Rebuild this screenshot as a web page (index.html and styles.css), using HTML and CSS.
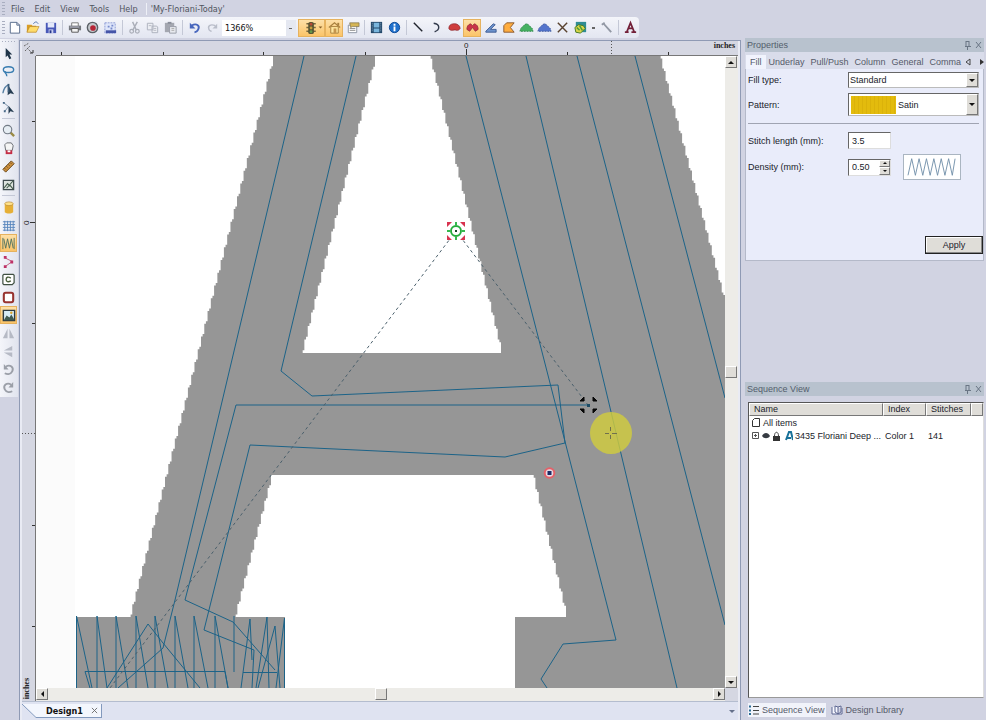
FILE: index.html
```html
<!DOCTYPE html>
<html lang="en">
<head>
<meta charset="utf-8">
<title>My-Floriani-Today</title>
<link rel="stylesheet" href="styles.css">
</head>
<body>
<nav class="menubar" aria-label="Menu">
  <span class="grip"></span>
  <button>File</button><button>Edit</button><button>View</button><button>Tools</button><button>Help</button>
  <span class="menu-sep"></span>
  <button>'My-Floriani-Today'</button>
</nav>

<div class="toolbar" role="toolbar" aria-label="Main">
  <span class="grip"></span>
  <button class="tool" aria-label="New"><svg viewBox="0 0 16 16"><path d="M3.500 2.500h7l3 3v8.500h-10z" fill="#fff" stroke="#536789"/><path d="M10.500 2.500v3h3" fill="none" stroke="#536789"/></svg></button>
  <button class="tool" aria-label="Open"><svg viewBox="0 0 16 16"><path d="M2 13V5h5l1 1h4v7z" fill="#d99d26"/><path d="M2 13l3-6h10l-3 6z" fill="#ffdc6b" stroke="#ad7b1e" stroke-width=".6"/><path d="M9 4c2-3 4-2 5 0" fill="none" stroke="#4b6fa8"/></svg></button>
  <button class="tool" aria-label="Save"><svg viewBox="0 0 16 16"><path d="M3 3h11v11H3z" fill="#4858b8"/><path d="M5 3h7v5H5z" fill="#e4e9fa"/><path d="M6 10h5v4H6z" fill="#c8cdf0"/><path d="M7 11h2v3H7z" fill="#26378b"/></svg></button>
  <span class="sep"></span>
  <button class="tool" aria-label="Print"><svg viewBox="0 0 16 16"><path d="M5 3h7v4H5z" fill="#fff" stroke="#777"/><path d="M2 6h13v5H2z" fill="#73777d"/><path d="M5 9h7v4H5z" fill="#f4f4f4" stroke="#555"/><path d="M3 7h10v1H3z" fill="#bbc"/></svg></button>
  <button class="tool" aria-label="Record"><svg viewBox="0 0 16 16"><circle cx="8" cy="8" r="5.500" fill="#c5c9cd" stroke="#5a6066" stroke-width="1.500"/><circle cx="8.500" cy="8.500" r="3" fill="#b52536"/></svg></button>
  <button class="tool" aria-label="Design grid"><svg viewBox="0 0 16 16"><path d="M2 3h11v11H2z" fill="#dfe6fa" stroke="#8c9ad4" stroke-dasharray="2 1"/><path d="M3 11h11v3H3z" fill="#4555a8"/><path d="M5 6h2v2H5zM9 5h2v2H9zM8 8h2v2H8z" fill="#7689cb"/></svg></button>
  <span class="sep"></span>
  <button class="tool" aria-label="Cut"><svg viewBox="0 0 16 16"><path d="M6 2l4 9M11 2L6 11" stroke="#aaaeb8" stroke-width="1.500"/><circle cx="5" cy="12" r="2" fill="none" stroke="#aaaeb8" stroke-width="1.300"/><circle cx="11" cy="12" r="2" fill="none" stroke="#aaaeb8" stroke-width="1.300"/></svg></button>
  <button class="tool" aria-label="Copy"><svg viewBox="0 0 16 16"><path d="M2.500 3.500h6v7h-6zM7.500 6.500h5l1 1v6h-6z" fill="#eceef3" stroke="#adb1bd"/><path d="M9 9h3M9 11h3M4 6h3" stroke="#b7bac4"/></svg></button>
  <button class="tool" aria-label="Paste"><svg viewBox="0 0 16 16"><path d="M2 3h10v10H2z" fill="#a4a7b0"/><path d="M5 2h4v2H5z" fill="#888d98"/><path d="M7 7h7v7H7z" fill="#e7e9ee" stroke="#999da8"/><path d="M9 9h3M9 11h3" stroke="#aaa"/></svg></button>
  <span class="sep"></span>
  <button class="tool" aria-label="Undo"><svg viewBox="0 0 16 16"><path d="M5 6c5-3 9 0 7 4-1 2-2 3-4 3" fill="none" stroke="#4766bd" stroke-width="2"/><path d="M3 3v6h6z" fill="#4766bd"/></svg></button>
  <button class="tool" aria-label="Redo"><svg viewBox="0 0 16 16"><path d="M11 6C6 4 3 6 4 9c0 2 2 3 3 3" fill="none" stroke="#b9bdc9" stroke-width="1.500"/><path d="M13 4v5H8z" fill="#b9bdc9"/></svg></button>
  <select class="zoom" aria-label="Zoom"><option>1366%</option></select>
  <button class="tool wide on" aria-label="Stitch simulator"><svg viewBox="0 0 24 16"><path d="M6 4h10M6 8h10M6 12h10" stroke="#7a6940" stroke-width="1.500"/><rect x="8" y="2" width="6" height="13" rx="2" fill="#555534"/><circle cx="11" cy="4.500" r="1.500" fill="#b64a37"/><circle cx="11" cy="8.500" r="1.500" fill="#c69b3c"/><circle cx="11" cy="12.500" r="1.500" fill="#649a4b"/><path d="M19 7h4l-2 2z" fill="#876027"/></svg></button>
  <button class="tool on" aria-label="Home"><svg viewBox="0 0 16 16"><path d="M2 8l6-5 6 5" fill="none" stroke="#a8813f" stroke-width="1.300"/><path d="M4 7h8v7H4z" fill="#ffe7a0" stroke="#a8813f"/><path d="M7 9h3v5H7z" fill="#c4954d"/><path d="M11 3h2v3h-2z" fill="#a8813f"/></svg></button>
  <button class="tool" aria-label="Properties"><svg viewBox="0 0 16 16"><path d="M3.500 5.500h9v8h-9z" fill="#fff" stroke="#8b93a2"/><path d="M5 9h6M5 11h6" stroke="#888"/><path d="M5 3h10v4H8L6 8z" fill="#d5b556" stroke="#776b48" stroke-width=".7"/></svg></button>
  <span class="sep"></span>
  <button class="tool" aria-label="Film"><svg viewBox="0 0 16 16"><path d="M2 2h12v12H2z" fill="#23486a"/><path d="M5 3h6v5H5zM5 9h6v4H5z" fill="#79b5dc"/><path d="M3.500 3v10M12.500 3v10" stroke="#7fa1bd" stroke-dasharray="1 1"/></svg></button>
  <button class="tool" aria-label="Information"><svg viewBox="0 0 16 16"><circle cx="8" cy="8" r="5.500" fill="#1f70cc" stroke="#0d4a95"/><path d="M7 7h2v5H7zM7 4h2v2H7z" fill="#fff"/></svg></button>
  <span class="sep"></span>
  <button class="tool" aria-label="Line"><svg viewBox="0 0 16 16"><path d="M3 3l9 9" stroke="#20242d" stroke-width="1.500"/></svg></button>
  <button class="tool" aria-label="Arc"><svg viewBox="0 0 16 16"><path d="M5 3.500c7 1 7 7 1 9" fill="none" stroke="#333b4c" stroke-width="1.500"/></svg></button>
  <button class="tool" aria-label="Closed shape"><svg viewBox="0 0 16 16"><path d="M2 9c0-4 3-5 6-5s6 2 6 5c-1 2-3 2-4 2-2-1-3 0-5 0-1 0-3-1-3-2z" fill="#cf3d3d" stroke="#8d2b30" stroke-width=".8"/></svg></button>
  <button class="tool on" aria-label="Satin column"><svg viewBox="0 0 16 16"><path d="M2 10c0-3 1-5 4-6l2 2 2-2c3 1 4 3 4 6l-3 2-3-4-3 4z" fill="#c93447" stroke="#8d2b38" stroke-width=".8"/></svg></button>
  <button class="tool" aria-label="Angle fill"><svg viewBox="0 0 16 16"><path d="M3 12l8-8 2 1-5 5h6v3H3z" fill="#6d93cd" stroke="#34528c" stroke-width=".9"/></svg></button>
  <button class="tool" aria-label="Shape fill"><svg viewBox="0 0 16 16"><path d="M3 13V6l3-3h8l-4 5 4 5z" fill="#ffad3e" stroke="#8a5930"/></svg></button>
  <button class="tool" aria-label="Green fan"><svg viewBox="0 0 16 16"><path d="M1 12l1-3 2-2 2-2 2-1 2 1 2 2 2 2 1 3z" fill="#46b162" stroke="#2c8546" stroke-width="1" stroke-dasharray="2 1"/></svg></button>
  <button class="tool" aria-label="Blue fan"><svg viewBox="0 0 16 16"><path d="M1 12l1-3 2-2 2-2 2-1 2 1 2 2 2 2 1 3z" fill="#5474cc" stroke="#3a559d" stroke-width="1" stroke-dasharray="2 1"/></svg></button>
  <button class="tool" aria-label="Cross"><svg viewBox="0 0 16 16"><path d="M3 3l10 10M13 3L3 13" stroke="#59422f" stroke-width="1.500"/></svg></button>
  <button class="tool" aria-label="Appliqué"><svg viewBox="0 0 16 16"><path d="M3 2h11v11H3z" fill="#2f8c93"/><path d="M2 8l4-3 5 1 2 3-5 5-5-1z" fill="#d9d449" stroke="#447b27"/><path d="M4 8l3 3M7 6l3 5" stroke="#4b9a35" stroke-width="1.500"/></svg></button>
  <span class="drop-arrow"></span>
  <button class="tool" aria-label="Needle"><svg viewBox="0 0 16 16"><path d="M5 4l8 9M3 5l3-2" stroke="#9298a4" stroke-width="2"/></svg></button>
  <span class="sep"></span>
  <button class="tool" aria-label="Text"><svg viewBox="0 0 16 16"><path d="M2 13h4M9 13h5M4 13L8 3l4 10M6 9h5" fill="none" stroke="#722038" stroke-width="1.800"/></svg></button>
</div>

<main class="workspace">
  <div class="toolbox" role="toolbar" aria-label="Drawing tools">
    <span class="grip-h"></span>
    <button class="tool" aria-label="Select"><svg viewBox="0 0 16 16"><path d="M5 2v10l2-2 2 4 2-1-2-4h3z" fill="#1f3449"/></svg></button>
    <button class="tool" aria-label="Lasso"><svg viewBox="0 0 16 16"><ellipse cx="8" cy="6" rx="5.500" ry="3" fill="none" stroke="#397db1" stroke-width="1.500"/><path d="M5 8c-2 2 2 2 1 5" fill="none" stroke="#397db1" stroke-width="1.500"/></svg></button>
    <button class="tool" aria-label="Shape edit"><svg viewBox="0 0 16 16"><path d="M2 12c1-6 3-8 6-9" fill="none" stroke="#5780a4" stroke-width="1.500"/><path d="M8 4l6 9-4-1-3 2z" fill="#263d52"/><path d="M7 2h2v9H7z" fill="#3c5c7a"/></svg></button>
    <button class="tool" aria-label="Point edit"><svg viewBox="0 0 16 16"><path d="M3 3l5 4-4 5" fill="none" stroke="#758ea7"/><path d="M2 2h2v2H2zM3 11h2v2H3z" fill="#456684"/><path d="M8 6l6 7-4-1-2 3z" fill="#263d52"/></svg></button>
    <span class="sep-h"></span>
    <button class="tool" aria-label="Zoom"><svg viewBox="0 0 16 16"><path d="M10 10l4 4" stroke="#9b8b45" stroke-width="2.500"/><circle cx="7" cy="7" r="4.500" fill="#e6edf3" stroke="#737b86" stroke-width="1.200"/></svg></button>
    <button class="tool" aria-label="Pan"><svg viewBox="0 0 16 16"><path d="M5 10L4 4l2-2h5l2 3-1 5z" fill="#f5f5f5" stroke="#686b70"/><path d="M5 10h7v4H5z" fill="#c52d46"/><path d="M7 10h3v2H7z" fill="#fff"/></svg></button>
    <button class="tool" aria-label="Measure"><svg viewBox="0 0 16 16"><path d="M2 11l9-9 3 3-9 9z" fill="#cc8f3d" stroke="#66461c"/><path d="M4 10l1 1M6 8l1 1M8 6l1 1M10 4l1 1" stroke="#4f3616"/></svg></button>
    <button class="tool" aria-label="Image edit"><svg viewBox="0 0 16 16"><path d="M2.500 3.500h11v10h-11z" fill="#dce2de" stroke="#3f4b4f" stroke-width="1.300"/><path d="M3 12l4-5 3 3M13 4l-7 8M9 8l4 5" fill="none" stroke="#435b4b" stroke-width="1.200"/></svg></button>
    <span class="sep-h"></span>
    <button class="tool" aria-label="Thread"><svg viewBox="0 0 16 16"><path d="M4 4h9v9c-2 2-7 2-9 0z" fill="#e6af36"/><ellipse cx="8.500" cy="4" rx="4.500" ry="2" fill="#ffe28a" stroke="#b7842c" stroke-width=".7"/></svg></button>
    <button class="tool" aria-label="Grid"><svg viewBox="0 0 16 16"><path d="M2 4h13M2 7h13M2 10h13M2 13h13M4 3v11M7 3v11M10 3v11M13 3v11" stroke="#5a86be"/></svg></button>
    <button class="tool on" aria-label="Show stitches"><svg viewBox="0 0 16 16"><path d="M2 2v12M14 2v12M3 3l2 10 2-10 2 10 2-10 2 10" fill="none" stroke="#54745f"/></svg></button>
    <button class="tool" aria-label="Nodes"><svg viewBox="0 0 16 16"><path d="M4 4l8 4-7 5" fill="none" stroke="#c05b7d"/><path d="M3 2h3v3H3zM10 7h3v3h-3zM3 12h3v3H3z" fill="#be3267"/></svg></button>
    <button class="tool" aria-label="Commands"><svg viewBox="0 0 16 16"><path d="M3 2.500h10l1 1v8l-2 2H3l-1-1v-9z" fill="#fff" stroke="#405043" stroke-width="1.300"/><path d="M10.500 6.500c-3-2-5-1-5 1.500s2 3 5 1.500" fill="none" stroke="#4c603f" stroke-width="1.500"/></svg></button>
    <button class="tool" aria-label="Hoop"><svg viewBox="0 0 16 16"><rect x="3" y="3" width="10" height="10" rx="2" fill="#fff" stroke="#973330" stroke-width="2.200"/></svg></button>
    <button class="tool on" aria-label="Show image"><svg viewBox="0 0 16 16"><path d="M2.500 2.500h12v11h-12z" fill="#d7ecf5" stroke="#2d3b42" stroke-width="1.500"/><path d="M3 13l3-5 3 2 2-3 3 5v1z" fill="#405b51"/><circle cx="11" cy="5" r="1.300" fill="#dda82f"/></svg></button>
    <button class="tool" aria-label="Mirror horizontal"><svg viewBox="0 0 16 16"><path d="M7 3v10H2zM9 3v10h5z" fill="#b6bac5"/></svg></button>
    <button class="tool" aria-label="Mirror vertical"><svg viewBox="0 0 16 16"><path d="M12 2v5H3zM12 9v5L3 9z" fill="#b6bac5"/></svg></button>
    <button class="tool" aria-label="Rotate left"><svg viewBox="0 0 16 16"><path d="M5 5c5-3 9 1 7 5s-6 3-8 2" fill="none" stroke="#9b9fa8" stroke-width="2"/><path d="M3 2v6h5z" fill="#9b9fa8"/></svg></button>
    <button class="tool" aria-label="Rotate right"><svg viewBox="0 0 16 16"><path d="M11 5C6 2 2 6 4 10s6 3 8 2" fill="none" stroke="#9b9fa8" stroke-width="2"/><path d="M13 2v6H8z" fill="#9b9fa8"/></svg></button>
  </div>

  <section class="document">
    <div class="sheet">
      <div class="corner"><svg viewBox="0 0 12 12"><path d="M1 4l5-3M4 6l5 5M2 9l5-5" stroke="#666" stroke-dasharray="2 1"/><path d="M7 11h3V8" fill="none" stroke="#333"/></svg></div>
      <div class="ruler-x">
        <svg viewBox="36 41 702 15" preserveAspectRatio="xMinYMax slice"><path d="M61.500 53v3M163.500 53v3M263.500 53v3M365.500 53v3M466.500 50v6M567.500 53v3M668.500 53v3" stroke="#333"/><path d="M611.500 42v14" stroke="#555" stroke-dasharray="1 2"/><text x="464" y="49">0</text></svg>
        <span class="unit">inches</span>
      </div>
      <div class="ruler-y">
        <svg viewBox="23 56 13 632" preserveAspectRatio="xMaxYMin slice"><path d="M33 121.500h3M31 222.500h5M33 323.500h3M33 525.500h3M33 626.500h3" stroke="#333"/><path d="M23 433.500h13" stroke="#555" stroke-dasharray="1 2"/><text transform="translate(30 225) rotate(-90)">0</text></svg>
        <span class="unit">inches</span>
      </div>
      <svg class="canvas" id="canvas" viewBox="36 56 689 632" preserveAspectRatio="xMinYMin slice" role="img" aria-label="Letter A embroidery design">
        <rect x="36" y="56" width="39" height="632" fill="#fbfbfb"/>
        <path id="letter" fill="#969696" fill-rule="evenodd"/>
        <g class="thread">
          <path d="M304 56L175 600 163 648 118 688"/>
          <path d="M356 56L281 371 312 396 558 385 565 443 505 457 250 445 204 630 254 650 252 688"/>
          <path d="M588 405H236L185 600 233 622 275 670"/>
          <path d="M466 56L616 640 563 644 541 679 547 688M526 56L677 688M577 56L725 625M635 56L725 398"/>
          <path d="M76.500 688V616L92 688M97 688V616L107 688M116 688V616L128 688M136 688V616L148 688M155 688V616L168 688M175 688V616L188 688M194 688V616L208 688M215 688V616L228 688M234 672V616"/>
          <path d="M241 688L250 619 252 660M256 688L267 617 269 688M276 688L284.500 618V688M107 688L148 624 163 643 200 688M258 688L275 626 280 688M90 688L85 671.500H225L228 688M243 672.500H277"/>
        </g>
        <path class="jump" d="M456 231L110 688M456 231L588 405"/>
        <g class="start"><path d="M447 222h18v18h-18z" fill="#fff"/><path d="M447 222h5l-5 5zM465 222h-5l5 5zM447 240h5l-5-5zM465 240h-5l5-5z" fill="#d8324f"/><path d="M456 222v3M456 237v3M447 231h3M462 231h3" stroke="#36b94e" stroke-width="2"/><circle cx="456" cy="231" r="5" fill="#fff" stroke="#25ad3c" stroke-width="1.900"/><path d="M455 230h2v2h-2z" fill="#174b28"/></g>
        <path d="M584 397v4h-4zM593 397v4h4zM584 413v-4h-4zM593 413v-4h4z" fill="#070707" stroke="#070707"/><path d="M587 404h3v3h-3z" fill="#1c4a63"/>
        <circle cx="549.500" cy="473" r="4.800" fill="#e6dce4" stroke="#e46169" stroke-width="2"/><path d="M547.500 471h4v4h-4z" fill="#1d2965"/>
        <circle cx="611" cy="433" r="21" fill="#d2cd3c" opacity=".8"/>
        <path d="M605 433.500h4M612 433.500h5M610.500 427v4M610.500 435v4" stroke="#70704d"/>
      </svg>
      <div class="scroll-y"><button aria-label="Scroll up"><i class="up"></i></button><span class="thumb"></span><button aria-label="Scroll down"><i class="down"></i></button></div>
      <div class="scroll-x"><button aria-label="Scroll left"><i class="left"></i></button><span class="thumb"></span><button aria-label="Scroll right"><i class="right"></i></button></div>
    </div>
    <div class="doc-tabs"><svg class="slant" viewBox="0 0 16 14" preserveAspectRatio="none"><path d="M0 0h16v14H14z" fill="#f3f6fd"/><path d="M0 0l14 13.500h2" fill="none" stroke="#8299bd"/></svg><button class="doc-tab"><b>Design1</b><svg viewBox="0 0 8 8"><path d="M1 1l6 6M7 1L1 7" stroke="#666"/></svg></button><i class="tab-menu"></i></div>
  </section>

  <aside class="docks">
    <section class="dock">
      <header class="dock-title"><h2>Properties</h2><svg viewBox="0 0 20 10"><path d="M3 1v5M6 1v5M2 6.500h6M3 1.500h3M4.500 7v3M13 2l5 6M18 2l-5 6" fill="none" stroke="#697584"/></svg></header>
      <div class="prop-tabs"><button class="active">Fill</button><button>Underlay</button><button>Pull/Push</button><button>Column</button><button>General</button><button>Comma</button><svg viewBox="0 0 22 8"><path d="M6 1v6L2 4z" fill="none" stroke="#444"/><path d="M16 1v6l4-3z" fill="#333"/></svg></div>
      <form class="props">
        <label for="fill">Fill type:</label>
        <span class="combo"><select id="fill"><option>Standard</option></select><i class="combo-arrow"></i></span>
        <label for="pattern">Pattern:</label>
        <span class="combo tall"><span class="swatch"></span><select id="pattern"><option>Satin</option></select><i class="combo-arrow"></i></span>
        <hr>
        <label for="length">Stitch length (mm):</label>
        <input id="length" value="3.5">
        <label for="density">Density (mm):</label>
        <div class="density"><span class="spin"><input id="density" value="0.50"><span class="steps"><button type="button" aria-label="Increase"><i class="up"></i></button><button type="button" aria-label="Decrease"><i class="down"></i></button></span></span>
        <svg class="preview" viewBox="0 0 58 26"><path d="M3 22L7 4l4 18 4-18 4 18 4-18 4 18 4-18 4 18 4-18 4 18 4-18 4 18 3-18" fill="none" stroke="#718fa9"/></svg></div>
        <button type="button" class="apply">Apply</button>
      </form>
    </section>
    <section class="dock sequence">
      <header class="dock-title"><h2>Sequence View</h2><svg viewBox="0 0 20 10"><path d="M3 1v5M6 1v5M2 6.500h6M3 1.500h3M4.500 7v3M13 2l5 6M18 2l-5 6" fill="none" stroke="#697584"/></svg></header>
      <div class="list">
        <table>
          <colgroup><col><col class="c-index"><col class="c-stitches"><col class="c-end"></colgroup>
          <thead><tr><th>Name</th><th>Index</th><th>Stitches</th><th></th></tr></thead>
          <tbody>
            <tr><td colspan="4"><span class="item"><svg class="page" viewBox="0 0 10 11"><path d="M3.500 1.500h5v8h-7v-6z" fill="#fff" stroke="#333"/></svg>All items</span></td></tr>
            <tr><td><span class="item"><svg class="marks" viewBox="0 0 42 12"><path d="M1.500 2.500h6v6h-6zM3 5.500h3M4.500 4v3" fill="none" stroke="#555"/><path d="M11 6c2-4 6-4 8 0-2 3-6 3-8 0z" fill="#363b42"/><path d="M22 6h7v5h-7z" fill="#333"/><path d="M23.500 6c0-5 4-5 4 0" fill="none" stroke="#444"/><path d="M35 10l3-8h2l2 8M36 8h4" fill="none" stroke="#187199" stroke-width="2"/></svg><span>3435 Floriani Deep ...</span></span></td><td>Color 1</td><td>141</td><td></td></tr>
          </tbody>
        </table>
      </div>
      <div class="view-tabs">
        <button class="active"><svg viewBox="0 0 12 10"><path d="M1 1.500h2M1 5.500h2M1 9h2" stroke="#286b94" stroke-width="2"/><path d="M5 1.500h6M5 5.500h6M5 9h6" stroke="#444"/></svg>Sequence View</button>
        <button><svg viewBox="0 0 12 10"><path d="M1 2v7h10V3M4 1v6l3 2V2zM7 2l3-1v6L7 9" fill="#f7f8ff" stroke="#5d6791"/></svg>Design Library</button>
      </div>
    </section>
  </aside>
</main>
<script src="letter.js"></script>
</body>
</html>
```
FILE: letter.js
```js
// Builds the bitmap letter's outline with stair-stepped diagonals.
const STEP = 3.3;

function stairs(x1, y1, x2, y2) {
  const count = Math.max(1, Math.round(Math.abs(x2 - x1) / STEP));
  const dx = (x2 - x1) / count;
  const dy = (y2 - y1) / count;
  let d = '';
  for (let i = 0; i < count; i++) {
    d += `v${dy * 0.8}h${dx * 0.5}v${dy * 0.2}h${dx * 0.5}`;
  }
  return d;
}

const outer = `M273 56${stairs(273, 56, 129, 617)}H76V688H725V305${stairs(725, 305, 659, 56)}Z`;
const counter = `M375 56${stairs(375, 56, 301, 353)}H501${stairs(501, 353, 429, 56)}Z`;
const legs = `M271 475${stairs(271, 475, 234, 617)}H285V688H515V617H566${stairs(566, 617, 532, 475)}Z`;

document.getElementById('letter').setAttribute('d', outer + counter + legs);
```
FILE: styles.css
```css
* { box-sizing: border-box; }
body {
  margin: 0;
  height: 100vh;
  display: flex;
  flex-direction: column;
  background: #d1d3e2;
  color: #20222a;
  font: 9px/12px "Liberation Sans", Arial, sans-serif;
  overflow: hidden;
}
button, input, select { font: inherit; color: inherit; margin: 0; padding: 0; border: 0; background: none; border-radius: 0; }
svg { display: block; }
h2 { margin: 0; font: inherit; }

.menubar, .doc-tabs { font-family: "DejaVu Sans Condensed", "DejaVu Sans", sans-serif; }
.menubar { display: flex; align-items: center; height: 17px; padding-left: 2px; color: #50535e; }
.menubar button { padding: 0 5px; }
.menubar .grip { margin-right: 1px; }
.menu-sep { width: 1px; height: 12px; margin: 0 1px 0 3px; background: #eef0f7; }
.menubar .menu-sep + button { padding: 0 3px; }
.grip { width: 3px; height: 13px; background: repeating-linear-gradient(#a9aec0 0 1px, transparent 1px 3px); }

.toolbar {
  display: flex; align-items: center; align-self: flex-start;
  height: 21px; padding-left: 2px;
  background: linear-gradient(#f4f5fa, #e3e6f1);
  border-radius: 0 4px 4px 0;
}
.tool { display: grid; place-items: center; width: 18px; height: 18px; flex: none; }
.tool svg { width: 15px; height: 15px; }
.tool.on { background: linear-gradient(#fde0a8, #fbc468); border: 1px solid #e6b25e; }
.tool.wide { width: 27px; }
.tool.wide svg { width: 24px; }
.sep { width: 6px; height: 15px; flex: none; background: linear-gradient(#c4c8d6, #c4c8d6) center / 1px 100% no-repeat; }
.zoom {
  width: 74px; height: 16px; margin: 0 2px 0 1px; padding-left: 3px; flex: none;
  appearance: none; color: #111; font-family: "DejaVu Sans Condensed", "DejaVu Sans", sans-serif;
  background: linear-gradient(#666, #666) 67px 8px / 3px 1px no-repeat, linear-gradient(90deg, #fff 64px, #e5e8f1 64px);
}
.drop-arrow { width: 8px; height: 3px; background: linear-gradient(#666, #666) center / 3px 2px no-repeat; }

.workspace { flex: 1; min-height: 0; display: grid; grid-template-columns: 19px minmax(0, 1fr) 245px; }
.toolbox { align-self: start; width: 18px; margin-top: 1px; padding-bottom: 1px; background: linear-gradient(90deg, #f4f5fa, #e1e4ee); }
.toolbox .tool { width: 17px; }
.grip-h { display: block; width: 13px; height: 5px; margin: 0 2px; background: repeating-linear-gradient(90deg, #a9aec0 0 1px, transparent 1px 3px) 0 2px / 100% 1px no-repeat; }
.sep-h { display: block; width: 13px; height: 5px; margin: 0 2px; background: linear-gradient(#c4c8d6, #c4c8d6) center / 100% 1px no-repeat; }

.document { display: flex; flex-direction: column; min-width: 0; min-height: 0; margin-top: 2px; border: solid #8f9ab4; border-width: 1px 1px 0; background: #e9ebf4; padding: 0 2px 0 2px; }
.sheet {
  flex: 1; min-height: 0; display: grid;
  grid-template: 15px minmax(0, 1fr) 13px / 14px minmax(0, 1fr) 13px;
  background: #d5d7e2;
}
.corner { padding: 1px; }
.ruler-x { grid-column: 2 / 4; display: grid; overflow: hidden; border-bottom: 1px solid #777; }
.ruler-x > *, .ruler-y > * { grid-area: 1 / 1; }
.ruler-x svg { width: 100%; height: 14px; }
.ruler-x .unit { justify-self: end; padding: 0 3px; }
.unit { font: 8px/9px "Liberation Serif", serif; font-weight: bold; color: #222; }
.ruler-x text, .ruler-y text { font: 8px "Liberation Sans", sans-serif; fill: #222; }
.ruler-y { grid-row: 2 / 4; display: grid; overflow: hidden; border-right: 1px solid #777; }
.ruler-y svg { width: 13px; height: 632px; }
.ruler-y .unit { align-self: end; writing-mode: vertical-rl; transform: rotate(180deg); padding: 2px 0; }
.canvas { width: 100%; height: 100%; min-height: 0; background: #fff; }
.thread path { fill: none; stroke: #1c6388; stroke-width: 1; }
.jump { fill: none; stroke: #4b606c; stroke-dasharray: 3 3; }

.scroll-x, .scroll-y { display: flex; justify-content: space-between; background: #edece8; }
.scroll-y { flex-direction: column; }
.scroll-x { grid-column: 2; }
.scroll-x button, .scroll-y button, .thumb { display: grid; place-items: center; width: 12px; height: 12px; background: #dfddd8; border: 1px solid; border-color: #fff #777 #777 #fff; }
.up, .down, .left, .right { width: 0; height: 0; border: 3px solid transparent; }
.up { border-top: 0; border-bottom-color: #111; }
.down { border-bottom: 0; border-top-color: #111; }
.left { border-left: 0; border-right-color: #111; }
.right { border-right: 0; border-left-color: #111; }

.doc-tabs { display: flex; align-items: flex-start; height: 19px; padding: 2px 3px 0 0; background: #dfe3f1; border-top: 1px solid #b4bdcf; }
.slant { width: 16px; height: 14px; }
.doc-tab { display: flex; align-items: center; gap: 8px; height: 14px; padding: 0 3px 0 8px; background: #f3f6fd; border: solid #8299bd; border-width: 0 1px 1px 0; color: #111; }
.doc-tab svg { width: 7px; height: 7px; }
.tab-menu { margin: 6px 0 0 auto; border: 3px solid transparent; border-top-color: #65708a; border-bottom: 0; }

.docks { display: grid; grid-template: 344fr 338fr / minmax(0, 1fr); min-height: 0; padding: 0 2px 0 4px; }
.dock { display: flex; flex-direction: column; min-height: 0; }
.dock-title { display: flex; align-items: center; justify-content: space-between; height: 14px; flex: none; padding: 0 1px 0 2px; background: #b8c2ce; color: #535e6c; }
.dock-title svg { width: 20px; height: 10px; }
.prop-tabs { display: flex; align-items: center; height: 17px; padding: 3px 0 0 1px; background: #d9dcea; color: #555a69; }
.prop-tabs button { height: 14px; padding: 0 3px; flex: none; }
.prop-tabs .active { background: #f1f3fd; padding: 0 4px; }
.prop-tabs svg { width: 22px; height: 8px; margin-left: auto; flex: none; }
.props {
  display: grid; grid-template-columns: 96px minmax(0, 1fr); gap: 5px 4px; align-items: center;
  padding: 3px 4px 6px 2px;
  background: #e9ecfa; border: 1px solid #b4b9c9; border-top: 0;
}
.combo { display: grid; align-items: center; height: 16px; background: #fff; border: 1px solid; border-color: #666 #bbb #bbb #666; }
.combo > * { grid-area: 1 / 1; }
.combo select { width: 100%; height: 100%; padding-left: 1px; appearance: none; }
.combo.tall { height: 23px; }
.combo.tall select { padding-left: 49px; }
.combo-arrow { justify-self: end; width: 12px; height: 100%; display: grid; place-items: center; pointer-events: none; background: #dfddd8; border: 1px solid; border-color: #fff #777 #777 #fff; }
.combo-arrow::after { content: ""; border: 3px solid transparent; border-top-color: #111; border-bottom: 0; }
.swatch { width: 45px; height: 18px; margin-left: 2px; background: repeating-linear-gradient(90deg, #e3bb0d 0 3px, #dbb20a 3px 4px); }
.props hr { grid-column: 1 / 3; width: 100%; height: 1px; margin: 2px 0 3px; border: 0; background: #a0a4b2; }
.props input { width: 43px; height: 17px; padding: 0 3px; background: #fff; border: 1px solid; border-color: #666 #ddd #ddd #666; }
.density { display: flex; gap: 12px; align-items: center; }
.spin { display: flex; width: 43px; height: 17px; background: #fff; border: 1px solid; border-color: #666 #ddd #ddd #666; }
.props .spin input { flex: 1; min-width: 0; width: 0; height: 15px; border: 0; }
.steps { display: grid; width: 11px; }
.steps button { display: grid; place-items: center; background: #dfddd8; border: 1px solid; border-color: #fff #777 #777 #fff; }
.steps i { border-width: 2px; }
.steps .up { border-top: 0; }
.steps .down { border-bottom: 0; }
.preview { width: 58px; height: 26px; background: #fff; border: 1px solid #aab5c1; }
.apply { grid-column: 2; justify-self: end; width: 58px; height: 18px; margin: 51px -4px 0 0; background: #dfddd8; border: 1px solid #222; box-shadow: inset -1px -1px #888, inset 1px 1px #fff; }

.list { flex: 1; min-height: 0; margin: 6px 0 0 3px; background: #fff; border: 1px solid; border-color: #555 #ddd #999 #555; overflow: hidden; }
table { width: 100%; border-collapse: separate; border-spacing: 0; table-layout: fixed; }
.c-index { width: 43px; }
.c-stitches { width: 45px; }
.c-end { width: 12px; }
th, td { height: 13px; padding: 0 2px; text-align: left; font-weight: normal; white-space: nowrap; overflow: hidden; }
th { padding: 0 4px; background: #dfddd8; border: 1px solid; border-color: #fff #777 #777 #fff; line-height: 11px; }
td:first-child { padding: 0 0 0 2px; }
.item { display: flex; align-items: center; gap: 2px; }
.page { width: 10px; height: 11px; }
.marks { width: 42px; height: 12px; flex: none; }
.view-tabs { display: flex; height: 22px; padding: 5px 0 3px 3px; gap: 5px; flex: none; color: #555a69; }
.view-tabs button { display: flex; align-items: center; gap: 2px; padding: 0 2px 0 0; }
.view-tabs .active { background: #f1f3fa; }
.view-tabs svg { width: 12px; height: 10px; }
```
